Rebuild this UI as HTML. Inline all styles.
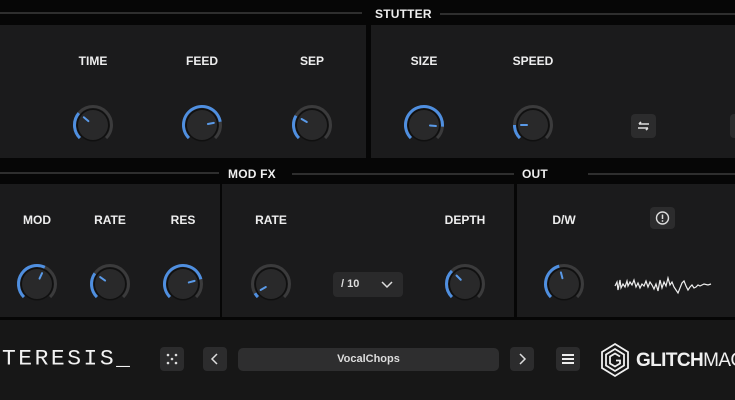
<!DOCTYPE html>
<html><head><meta charset="utf-8"><style>
*{margin:0;padding:0;box-sizing:border-box}
body{width:735px;height:400px;background:#060606;position:relative;overflow:hidden;font-family:"Liberation Sans",sans-serif;color:#e8e8e8}
.p{position:absolute;background:#1b1b1c}
.hl{position:absolute;height:2px;background:#2e2e2e}
.ht{position:absolute;font-size:12px;font-weight:bold;color:#eee;letter-spacing:.2px}
.lb{position:absolute;font-size:12px;font-weight:bold;color:#eee;transform:translateX(-50%)}
.k{position:absolute;width:44px;height:44px}
.btn{position:absolute;background:#2c2c2d;border-radius:4px}
</style></head><body>
<div class="hl" style="left:0;top:12px;width:362px"></div>
<div class="hl" style="left:440px;top:13px;width:295px"></div>
<div class="ht" style="left:375px;top:7px">STUTTER</div>
<div class="p" style="left:0;top:25px;width:366px;height:133px"></div>
<div class="p" style="left:371px;top:25px;width:364px;height:133px"></div>

<div class="hl" style="left:0;top:172px;width:219px"></div>
<div class="hl" style="left:292px;top:173px;width:222px"></div>
<div class="hl" style="left:588px;top:173px;width:147px"></div>
<div class="ht" style="left:228px;top:167px">MOD FX</div>
<div class="ht" style="left:522px;top:167px">OUT</div>
<div class="p" style="left:0;top:184px;width:220px;height:133px"></div>
<div class="p" style="left:222px;top:184px;width:292px;height:133px"></div>
<div class="p" style="left:517px;top:184px;width:218px;height:133px"></div>

<div class="lb" style="left:93px;top:54px">TIME</div>
<div class="lb" style="left:202px;top:54px">FEED</div>
<div class="lb" style="left:312px;top:54px">SEP</div>
<div class="lb" style="left:424px;top:54px">SIZE</div>
<div class="lb" style="left:533px;top:54px">SPEED</div>
<div class="lb" style="left:37px;top:213px">MOD</div>
<div class="lb" style="left:110px;top:213px">RATE</div>
<div class="lb" style="left:183px;top:213px">RES</div>
<div class="lb" style="left:271px;top:213px">RATE</div>
<div class="lb" style="left:465px;top:213px">DEPTH</div>
<div class="lb" style="left:564px;top:213px">D/W</div>

<div class="btn" style="left:631px;top:114px;width:25px;height:24px"><svg width="25" height="24"><path d="M8 10h10M8 10l2-2M17 14H7M17 14l-2 2" stroke="#ddd" stroke-width="1.6" fill="none"/></svg></div>
<div class="btn" style="left:730px;top:114px;width:20px;height:24px"></div>

<div class="btn" style="left:333px;top:272px;width:70px;height:25px;background:#2a2a2b"><span style="position:absolute;left:8px;top:6px;font-size:11px;font-weight:bold;color:#ddd">/ 10</span><svg style="position:absolute;left:48px;top:8px" width="12" height="10"><path d="M1 2l5 5 5-5" stroke="#ddd" stroke-width="1.5" fill="none"/></svg></div>

<div class="btn" style="left:650px;top:207px;width:25px;height:22px"><svg width="25" height="22"><circle cx="12.5" cy="11" r="6" stroke="#ddd" stroke-width="1.4" fill="none"/><path d="M12.5 7.5v4.5" stroke="#ddd" stroke-width="1.5"/><circle cx="12.5" cy="14" r=".9" fill="#ddd"/></svg></div>

<svg style="position:absolute;left:614px;top:272px" width="98" height="26"><path d="M1 14 L3 10 L4 18 L6 8 L7 16 L9 12 L11 15 L13 9 L14 14 L16 10 L18 13 L20 8 L22 15 L24 11 L26 16 L28 12 L30 14 L32 9 L34 15 L36 10 L38 13 L40 17 L42 12 L44 19 L46 8 L48 16 L50 10 L52 14 L54 6 L56 13 L58 10 L60 15 L62 18 L64 21 L66 16 L68 11 L70 9 L72 14 L74 18 L76 15 L78 13 L80 16 L82 15 L84 13 L86 14 L90 12 L94 13 L97 12" stroke="#eee" stroke-width="1.2" fill="none"/></svg>

<div style="position:absolute;left:0;top:320px;width:735px;height:80px;background:#171717"></div>
<div style="position:absolute;left:2px;top:346px;font-family:'Liberation Mono',monospace;font-size:23px;letter-spacing:2.5px;color:#f2f2f2;transform:scaleY(0.95)">TERESIS_</div>
<div class="btn" style="left:160px;top:347px;width:24px;height:24px"><svg width="24" height="24" fill="#ddd"><circle cx="8" cy="8" r="1.3"/><circle cx="16" cy="8" r="1.3"/><circle cx="12" cy="12" r="1.3"/><circle cx="8" cy="16" r="1.3"/><circle cx="16" cy="16" r="1.3"/></svg></div>
<div class="btn" style="left:203px;top:347px;width:24px;height:24px"><svg width="24" height="24"><path d="M14 7l-5 5 5 5" stroke="#ddd" stroke-width="1.5" fill="none"/></svg></div>
<div class="btn" style="left:238px;top:348px;width:261px;height:23px;background:#2e2e2f;border-radius:5px"><span style="position:absolute;left:0;right:0;top:5px;text-align:center;font-size:11px;font-weight:bold;color:#ddd">VocalChops</span></div>
<div class="btn" style="left:510px;top:347px;width:24px;height:24px"><svg width="24" height="24"><path d="M10 7l5 5-5 5" stroke="#ddd" stroke-width="1.5" fill="none"/></svg></div>
<div class="btn" style="left:556px;top:347px;width:24px;height:24px"><svg width="24" height="24"><path d="M6 8h12M6 12h12M6 16h12" stroke="#eee" stroke-width="2"/></svg></div>
<svg style="position:absolute;left:599px;top:342px" width="32" height="36"><g fill="none" stroke="#f0f0f0" stroke-width="1.8"><path d="M16 2L29 10V26L16 34L3 26V10Z"/><path d="M16 7L25 12.5V23.5L16 29L7 23.5V12.5Z"/><path d="M21 14.5L16 11.5L11 14.5V21.5L16 24.5L21 21.5V18.5H17"/></g></svg>
<div style="position:absolute;left:636px;top:350px;font-size:19px;color:#f0f0f0;white-space:nowrap;letter-spacing:-.6px"><b>GLITCH</b>MAC</div>

<div id="knobs"></div>
<script>
const K=[[93,125,-50],[202,125,80],[312,125,-60],[424,125,95],[533,125,-90],[37,284,25],[110,284,-55],[183,284,75],[271,284,-120],[465,284,-45],[564,284,-15]];
function pt(r,a){a=(a-90)*Math.PI/180;return [22+r*Math.cos(a),22+r*Math.sin(a)];}
function arc(r,a0,a1){const p=pt(r,a0),q=pt(r,a1);const l=(a1-a0)>180?1:0;return `M${p[0].toFixed(2)} ${p[1].toFixed(2)}A${r} ${r} 0 ${l} 1 ${q[0].toFixed(2)} ${q[1].toFixed(2)}`;}
let h='';
for(const [x,y,v] of K){
 const i0=pt(6,v),i1=pt(12,v);
 h+=`<svg class="k" style="left:${x-22}px;top:${y-22}px" width="44" height="44">
 <path d="${arc(18.5,-135,135)}" stroke="#3b3b3c" stroke-width="3" fill="none"/>
 <path d="${arc(18.5,-135,v)}" stroke="#4f8fe0" stroke-width="3" fill="none"/>
 <circle cx="22" cy="22" r="16.5" fill="#101010"/>
 <circle cx="22" cy="22" r="15" fill="#29292a"/>
 <line x1="${i0[0]}" y1="${i0[1]}" x2="${i1[0]}" y2="${i1[1]}" stroke="#5a9ae8" stroke-width="2" stroke-linecap="round"/></svg>`;
}
document.getElementById('knobs').innerHTML=h;
</script>
</body></html>
